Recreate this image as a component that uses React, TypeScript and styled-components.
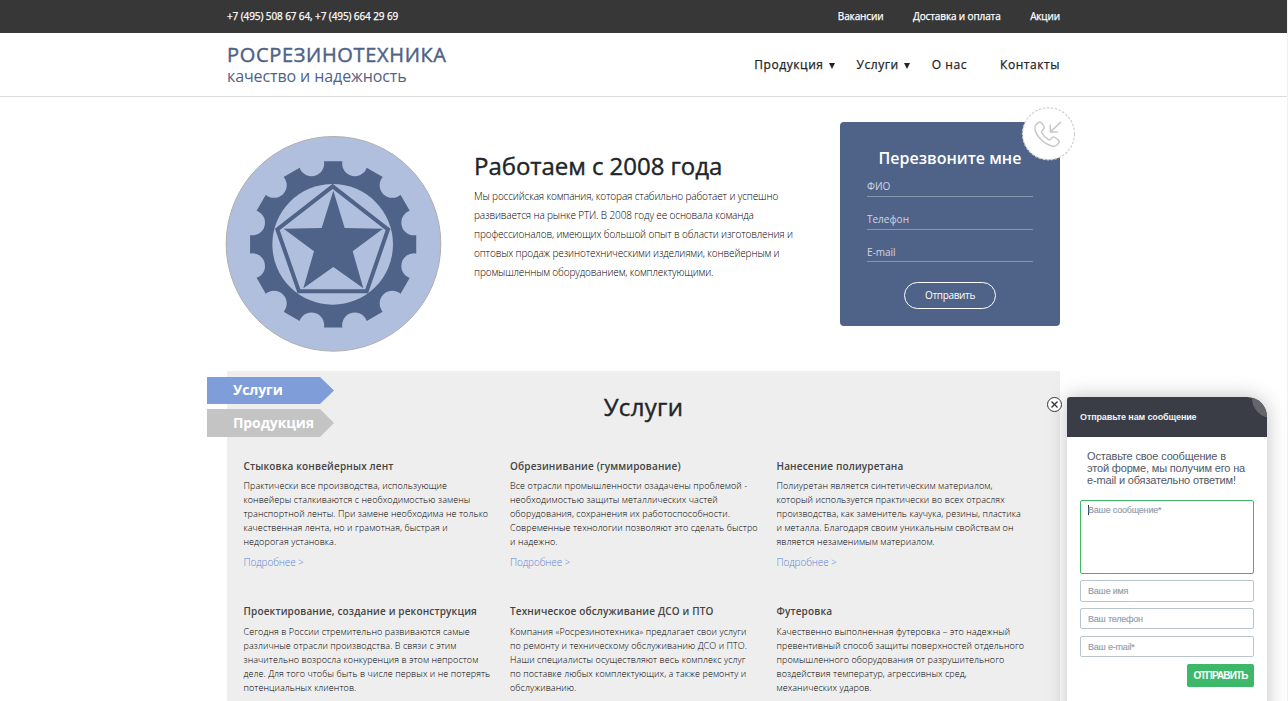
import React from "react";
import styled, { createGlobalStyle } from "styled-components";

const GlobalStyle = createGlobalStyle`
  * { box-sizing: border-box; }
  html, body { margin: 0; height: 701px; overflow: hidden; background: #fff; }
  body { font-family: "Open Sans", "Noto Sans", sans-serif; color: #212529; }
  h1, h2, h3, p { margin: 0; font-weight: inherit; }
`;

const Page = styled.div`
  position: relative;
  height: 701px;
  overflow: hidden;
  border-right: 1px solid #f1f1f1;
`;

const Container = styled.div`
  width: 833px;
  margin-left: 227px;
  display: flex;
  justify-content: space-between;
`;

const TopBar = styled.div`
  height: 33px;
  background: #373737;
  color: #fff;
  font-size: 10px;
  line-height: 33px;
  white-space: nowrap;
  -webkit-text-stroke: 0.25px currentColor;
`;

const Phones = styled.span`
  letter-spacing: -0.1px;
`;

const TopLinks = styled.nav`
  display: flex;
  gap: 29.5px;
  letter-spacing: -0.12px;
`;

const Header = styled.header`
  height: 64px;
  border-bottom: 1px solid #dcdcdc;
  white-space: nowrap;
`;

const Brand = styled.div`
  padding-top: 10px;
  color: #4f6288;
`;

const BrandName = styled.div`
  font-size: 20px;
  line-height: 24px;
  letter-spacing: 0.67px;
  -webkit-text-stroke: 0.45px currentColor;
`;

const BrandNote = styled.div`
  font-size: 16px;
  line-height: 18px;
  letter-spacing: -0.1px;
`;

const MainNav = styled.nav`
  display: flex;
  font-size: 12px;
  line-height: 63px;
  letter-spacing: 0.56px;
  color: #212529;
  -webkit-text-stroke: 0.25px currentColor;
`;

const NavItem = styled.span<{ $gap?: number }>`
  display: flex;
  align-items: center;
  height: 63px;
  margin-left: ${(p) => p.$gap ?? 0}px;
`;

const Caret = styled.span`
  margin: 2px 0 0 5px;
  border: 3px solid transparent;
  border-top: 6px solid #212529;
  border-bottom: 0;
`;

const Hero = styled.section`
  width: 833px;
  height: 274px;
  margin-left: 227px;
  display: flex;
  align-items: flex-start;
`;

const Emblem = styled.svg`
  flex: none;
  width: 217px;
  height: 217px;
  margin: 38px 0 0 -2px;
`;

const About = styled.div`
  width: 366px;
  flex: none;
  margin-left: 32px;
  padding-top: 53px;
  white-space: nowrap;
`;

const AboutTitle = styled.h1`
  font-size: 24px;
  line-height: 32px;
  letter-spacing: -0.05px;
  -webkit-text-stroke: 0.4px currentColor;
`;

const AboutText = styled.p`
  margin-top: 5px;
  font-size: 10px;
  line-height: 19px;
  font-weight: 300;
  letter-spacing: -0.13px;
  color: #000;
  white-space: pre;
`;

const Callback = styled.form`
  position: relative;
  flex: none;
  width: 220px;
  height: 204px;
  margin-top: 25px;
  padding: 24px 27px 0;
  border-radius: 4px;
  background: #4f6288;
  color: #fff;
  display: flex;
  flex-direction: column;
`;

const CallbackTitle = styled.h2`
  font-size: 16px;
  line-height: 24px;
  font-weight: 600;
  text-align: center;
  white-space: nowrap;
`;

const CallbackField = styled.div`
  height: 33px;
  padding-top: 15px;
  border-bottom: 1px solid #8896b0;
  font-size: 10px;
  line-height: 14px;
  color: #d0d6e0;

  &:first-of-type { height: 27px; padding-top: 9px; }
  &:nth-of-type(3) { height: 32px; }
`;

const CallbackButton = styled.div`
  width: 92px;
  height: 27px;
  margin: 20px auto 0;
  border: 1px solid #fff;
  border-radius: 14px;
  font-size: 10px;
  line-height: 25px;
  letter-spacing: -0.35px;
  text-align: center;
`;

const PhoneBadge = styled.svg`
  position: absolute;
  left: 180.5px;
  top: -16px;
  width: 55px;
  height: 55px;
`;

const Services = styled.section`
  position: relative;
  width: 833px;
  height: 330px;
  margin-left: 227px;
  background: #eee;
  white-space: nowrap;
`;

const Tabs = styled.div`
  position: absolute;
  left: -20px;
  top: 6px;
  display: flex;
  flex-direction: column;
  gap: 5px;
`;

const Tab = styled.div<{ $active?: boolean }>`
  width: 127px;
  height: ${(p) => (p.$active ? 27 : 28)}px;
  padding-left: 26px;
  background: ${(p) => (p.$active ? "#7e9dd9" : "#c4c4c4")};
  color: #fff;
  font-size: 14px;
  line-height: ${(p) => (p.$active ? 25 : 27)}px;
  font-weight: 700;
  letter-spacing: -0.1px;
  clip-path: polygon(0 0, 113px 0, 100% 50%, 113px 100%, 0 100%);
`;

const ServicesTitle = styled.h2`
  padding-top: 20px;
  font-size: 24px;
  line-height: 32px;
  letter-spacing: 0.3px;
  text-align: center;
  -webkit-text-stroke: 0.4px currentColor;
`;

const ServiceGrid = styled.div`
  display: grid;
  grid-template-columns: repeat(3, 266.5px);
  grid-auto-rows: 145.3px;
  padding: 36px 0 0 16.5px;
`;

const CardTitle = styled.h3`
  font-size: 10px;
  line-height: 14px;
  font-weight: 600;
  letter-spacing: 0.15px;
  color: #444;
`;

const CardText = styled.p`
  margin-top: 6.3px;
  font-size: 9px;
  line-height: 14px;
  font-weight: 300;
  letter-spacing: 0.08px;
  color: #000;
  white-space: pre;
`;

const CardLink = styled.div`
  margin-top: 5.5px;
  font-size: 10px;
  line-height: 14px;
  font-weight: 300;
  letter-spacing: -0.12px;
  color: #5c84d4;
`;

const Chat = styled.aside`
  position: absolute;
  left: 1067px;
  top: 397px;
  width: 200px;
  height: 340px;
  border-radius: 3px 20px 0 0;
  background: #fff;
  box-shadow: 0 0 20px rgba(0, 0, 0, 0.25);
  font-family: "Liberation Sans", Arial, sans-serif;
  white-space: nowrap;
`;

const ChatHeader = styled.div`
  position: relative;
  height: 40px;
  padding-left: 13px;
  overflow: hidden;
  border-radius: 3px 20px 0 0;
  background: #3a3d46;
  color: #f0f0f2;
  font-size: 9px;
  line-height: 40px;
  font-weight: 700;
  letter-spacing: -0.12px;
`;

const ChatCorner = styled.span`
  position: absolute;
  right: -25px;
  top: -19px;
  width: 40px;
  height: 40px;
  border-radius: 50%;
  background: #64666d;
`;

const ChatBody = styled.div`
  padding: 13px 13px 0;
  display: flex;
  flex-direction: column;
`;

const ChatIntro = styled.p`
  margin-left: 7px;
  font-size: 11px;
  line-height: 12px;
  letter-spacing: -0.16px;
  color: #525764;
  white-space: pre;
`;

const ChatField = styled.div<{ $area?: boolean; $height: number; $top: number }>`
  height: ${(p) => p.$height}px;
  margin-top: ${(p) => p.$top}px;
  padding: ${(p) => (p.$area ? 4 : 5)}px 7px;
  border: 1px solid ${(p) => (p.$area ? "#3db768" : "#b9c6cd")};
  border-radius: 2px;
  font-size: 9px;
  line-height: 10px;
  letter-spacing: -0.2px;
  color: #929dae;
  -webkit-text-stroke: 0.15px currentColor;
`;

const TextCursor = styled.span`
  display: inline-block;
  width: 1px;
  height: 10px;
  margin-right: -1px;
  vertical-align: top;
  background: #333;
`;

const ChatButton = styled.div`
  align-self: flex-end;
  width: 67px;
  height: 23px;
  margin-top: 7px;
  border-radius: 2px;
  background: #3db768;
  color: #fff;
  font-size: 10px;
  line-height: 23px;
  font-weight: 700;
  letter-spacing: -0.85px;
  text-align: center;
`;

const ChatClose = styled.svg`
  position: absolute;
  left: -21px;
  top: -1px;
  width: 17px;
  height: 17px;
`;

const services = [
  { more: true, title: "Стыковка конвейерных лент", text: "Практически все производства, использующие\nконвейеры сталкиваются с необходимостью замены\nтранспортной ленты. При замене необходима не только\nкачественная лента, но и грамотная, быстрая и\nнедорогая установка." },
  { more: true, title: "Обрезинивание (гуммирование)", text: "Все отрасли промышленности озадачены проблемой -\nнеобходимостью защиты металлических частей\nоборудования, сохранения их работоспособности.\nСовременные технологии позволяют это сделать быстро\nи надежно." },
  { more: true, title: "Нанесение полиуретана", text: "Полиуретан является синтетическим материалом,\nкоторый используется практически во всех отраслях\nпроизводства, как заменитель каучука, резины, пластика\nи металла. Благодаря своим уникальным свойствам он\nявляется незаменимым материалом." },
  { title: "Проектирование, создание и реконструкция", text: "Сегодня в России стремительно развиваются самые\nразличные отрасли производства. В связи с этим\nзначительно возросла конкуренция в этом непростом\nделе. Для того чтобы быть в числе первых и не потерять\nпотенциальных клиентов." },
  { title: "Техническое обслуживание ДСО и ПТО", text: "Компания «Росрезинотехника» предлагает свои услуги\nпо ремонту и техническому обслуживанию ДСО и ПТО.\nНаши специалисты осуществляют весь комплекс услуг\nпо поставке любых комплектующих, а также ремонту и\nобслуживанию." },
  { title: "Футеровка", text: "Качественно выполненная футеровка – это надежный\nпревентивный способ защиты поверхностей отдельного\nпромышленного оборудования от разрушительного\nвоздействия температур, агрессивных сред,\nмеханических ударов." },
];

const aboutText =
  "Мы российская компания, которая стабильно работает и успешно\nразвивается на рынке РТИ. В 2008 году ее основала команда\nпрофессионалов, имеющих большой опыт в области изготовления и\nоптовых продаж резинотехническими изделиями, конвейерным и\nпромышленным оборудованием, комплектующими.";

const polar = (radius: number, degrees: number) => {
  const a = (degrees * Math.PI) / 180;
  return [354.5 + radius * Math.sin(a), 358 - radius * Math.cos(a)];
};
const notchAngles = Array.from({ length: 12 }, (_, i) => 15 + i * 30);
const gearOutline = notchAngles.map((a) => polar(258, a).join(",")).join(" ");

function GearEmblem() {
  return (
    <Emblem viewBox="30 30 651 651">
      <circle cx="355.5" cy="356.5" r="322" fill="#b0bfdd" stroke="#b0afaf" strokeWidth="3" />
      <polygon points={gearOutline} fill="#4f6288" />
      {notchAngles.map((a) => {
        const [x, y] = polar(251, a);
        return <circle key={a} cx={x} cy={y} r="38" fill="#b0bfdd" />;
      })}
      <circle cx="353" cy="358" r="181" fill="#b0bfdd" />
      <polygon points="353,184 519,313 455,499 252,499 187,313" fill="none" stroke="#4f6288" strokeWidth="12" />
      <polygon points="355,197 389,309 504,311 413,379 445,490 355,426 265,490 297,379 206,311 320,309" fill="#4f6288" />
    </Emblem>
  );
}

export default function App() {
  return (
    <Page>
      <GlobalStyle />
      <TopBar>
        <Container>
          <Phones>+7 (495) 508 67 64, +7 (495) 664 29 69</Phones>
          <TopLinks>
            <span>Вакансии</span>
            <span>Доставка и оплата</span>
            <span>Акции</span>
          </TopLinks>
        </Container>
      </TopBar>
      <Header>
        <Container>
          <Brand>
            <BrandName>РОСРЕЗИНОТЕХНИКА</BrandName>
            <BrandNote>качество и надежность</BrandNote>
          </Brand>
          <MainNav>
            <NavItem>Продукция<Caret /></NavItem>
            <NavItem $gap={22}>Услуги<Caret /></NavItem>
            <NavItem $gap={22}>О нас</NavItem>
            <NavItem $gap={33}>Контакты</NavItem>
          </MainNav>
        </Container>
      </Header>
      <Hero>
        <GearEmblem />
        <About>
          <AboutTitle>Работаем с 2008 года</AboutTitle>
          <AboutText>{aboutText}</AboutText>
        </About>
        <Callback>
          <CallbackTitle>Перезвоните мне</CallbackTitle>
          <CallbackField>ФИО</CallbackField>
          <CallbackField>Телефон</CallbackField>
          <CallbackField>E-mail</CallbackField>
          <CallbackButton>Отправить</CallbackButton>
          <PhoneBadge viewBox="0 0 55 55" fill="none">
            <circle cx="27.5" cy="27.8" r="26" fill="#fff" stroke="#d0d0d0" strokeWidth="1.2" strokeDasharray="2.5 1.5" />
            <g transform="translate(0 .9)" stroke="#c8c8c8" strokeWidth="1.5" strokeLinecap="round" strokeLinejoin="round">
              <path d="M15 18l2.500-2.500q1.500-1 3 .5l2.500 3.500q.8 1.500-.5 2.700l-1.600 1.600q-.8 1.200 0 2.500c1.500 2.500 3.500 4.600 6.200 6.200q1.300.8 2.400-.1l1.600-1.500q1.400-1.300 2.900-.3l3.500 2.600q1.500 1.400.3 2.900l-1.800 2q-2 1.600-5 1c-8-2-15.500-9.500-17.200-17q-.5-2.500 1.200-4.100z" />
              <path d="M39.500 15.500l-10 9.500M29.300 18v7.200h7" />
            </g>
          </PhoneBadge>
        </Callback>
      </Hero>
      <Services>
        <Tabs>
          <Tab $active>Услуги</Tab>
          <Tab>Продукция</Tab>
        </Tabs>
        <ServicesTitle>Услуги</ServicesTitle>
        <ServiceGrid>
          {services.map((s) => (
            <article key={s.title}>
              <CardTitle>{s.title}</CardTitle>
              <CardText>{s.text}</CardText>
              {s.more && <CardLink>Подробнее &gt;</CardLink>}
            </article>
          ))}
        </ServiceGrid>
      </Services>
      <Chat>
        <ChatClose viewBox="0 0 17 17" fill="none" stroke="#333">
          <circle cx="8.500" cy="8.500" r="7" fill="#fff" />
          <path d="M5.500 5.500l6 6M11.500 5.500l-6 6" strokeWidth="1.300" />
        </ChatClose>
        <ChatHeader>
          Отправьте нам сообщение
          <ChatCorner />
        </ChatHeader>
        <ChatBody>
          <ChatIntro>{"Оставьте свое сообщение в\nэтой форме, мы получим его на\ne-mail и обязательно ответим!"}</ChatIntro>
          <ChatField $area $height={74} $top={14}><TextCursor />Ваше сообщение*</ChatField>
          <ChatField $height={22} $top={6}>Ваше имя</ChatField>
          <ChatField $height={21} $top={6}>Ваш телефон</ChatField>
          <ChatField $height={21} $top={7}>Ваш e-mail*</ChatField>
          <ChatButton>ОТПРАВИТЬ</ChatButton>
        </ChatBody>
      </Chat>
    </Page>
  );
}
